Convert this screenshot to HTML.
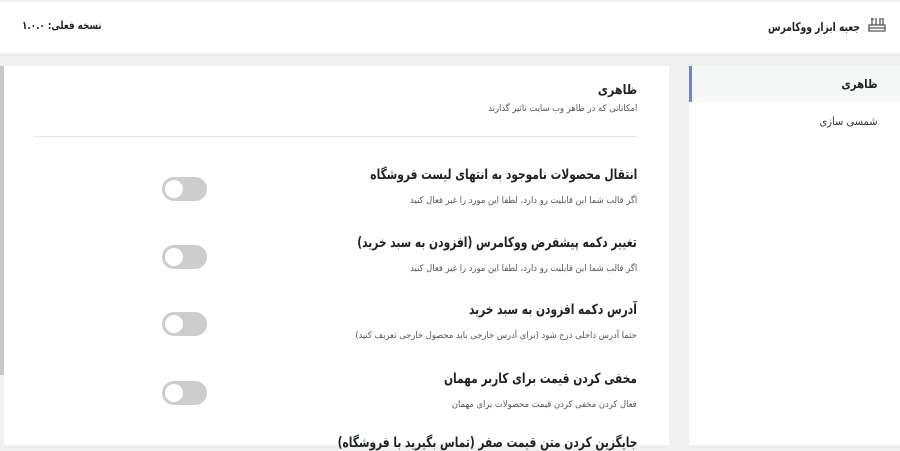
<!DOCTYPE html>
<html><head><meta charset="utf-8"><style>
*{margin:0;padding:0;box-sizing:border-box}
body{width:900px;height:445px;overflow:hidden;background:#f0f0f1;font-family:"DejaVu Sans","Liberation Sans",sans-serif;color:#1d2327;position:relative}
.hdr{position:absolute;left:0;top:2px;width:900px;height:51px;background:#fff}
.a{position:absolute;white-space:nowrap;direction:rtl;transform-origin:right center}
.panel{position:absolute;left:4px;top:66px;width:665px;height:379px;background:#fff}
.sb{position:absolute;left:0;top:66px;width:4px;height:309px;background:#c8c8c8}
.side{position:absolute;left:689px;top:66px;width:211px;height:379px;background:#fff}
.act{position:absolute;left:689px;top:66px;width:211px;height:36px;background:#f6f7f7;border-left:3px solid #6b83e0}
.t{font-weight:bold;font-size:14px;right:263px;transform:scaleX(0.76)}
.d{font-size:9px;color:#50575e;right:263px;transform:scaleX(0.93)}
.tg{position:absolute;left:162px;width:45px;height:24px;border-radius:12px;background:#cdcdcd}
.tg:after{content:"";position:absolute;left:3px;top:3px;width:18px;height:18px;border-radius:50%;background:#fff}
</style></head><body>
<div class="hdr"></div>
<div class="a" style="left:22px;top:19px;font-size:11px;font-weight:bold;transform:scaleX(0.8);transform-origin:left center">نسخه فعلی: ۱.۰.۰</div>
<div class="a" style="right:40px;top:20px;font-size:12px;font-weight:bold;transform:scaleX(0.76)">جعبه ابزار ووکامرس</div>
<svg style="position:absolute;left:867px;top:15px" width="20" height="20" viewBox="0 0 20 20" fill="none" stroke="#555" stroke-width="1.3"><path d="M2 10h16v6H2z M2 13h16 M5 3v7 M9 3v7 M13 5v5 M4 4h3 M12 4l3 0 M16 3v7"/></svg>
<div class="sb"></div>
<div class="panel"></div>
<div class="side"></div>
<div class="act"></div>
<div class="a" style="right:22px;top:77px;font-size:12px;font-weight:bold;transform:scaleX(0.85)">ظاهری</div>
<div class="a" style="right:22px;top:115px;font-size:11px;color:#333;transform:scaleX(0.9)">شمسی سازی</div>
<div class="a" style="right:263px;top:83px;font-size:13px;font-weight:bold;transform:scaleX(0.85)">ظاهری</div>
<div class="a d" style="top:104px">امکاناتی که در ظاهر وب سایت تاثیر گذارند</div>
<div style="position:absolute;left:34px;top:136px;width:603px;height:1px;background:#e5e5e5"></div>
<div class="a t" style="top:167px">انتقال محصولات ناموجود به انتهای لیست فروشگاه</div>
<div class="a d" style="top:196px">اگر قالب شما این قابلیت رو دارد، لطفا این مورد را غیر فعال کنید</div>
<div class="tg" style="top:177px"></div>
<div class="a t" style="top:235px">تغییر دکمه پیشفرض ووکامرس (افزودن به سبد خرید)</div>
<div class="a d" style="top:264px">اگر قالب شما این قابلیت رو دارد، لطفا این مورد را غیر فعال کنید</div>
<div class="tg" style="top:245px"></div>
<div class="a t" style="top:302px">آدرس دکمه افزودن به سبد خرید</div>
<div class="a d" style="top:331px">حتما آدرس داخلی درج شود (برای آدرس خارجی باید محصول خارجی تعریف کنید)</div>
<div class="tg" style="top:312px"></div>
<div class="a t" style="top:371px">مخفی کردن قیمت برای کاربر مهمان</div>
<div class="a d" style="top:400px">فعال کردن مخفی کردن قیمت محصولات برای مهمان</div>
<div class="tg" style="top:381px"></div>
<div class="a t" style="top:435px">جایگزین کردن متن قیمت صفر (تماس بگیرید با فروشگاه)</div>
</body></html>
